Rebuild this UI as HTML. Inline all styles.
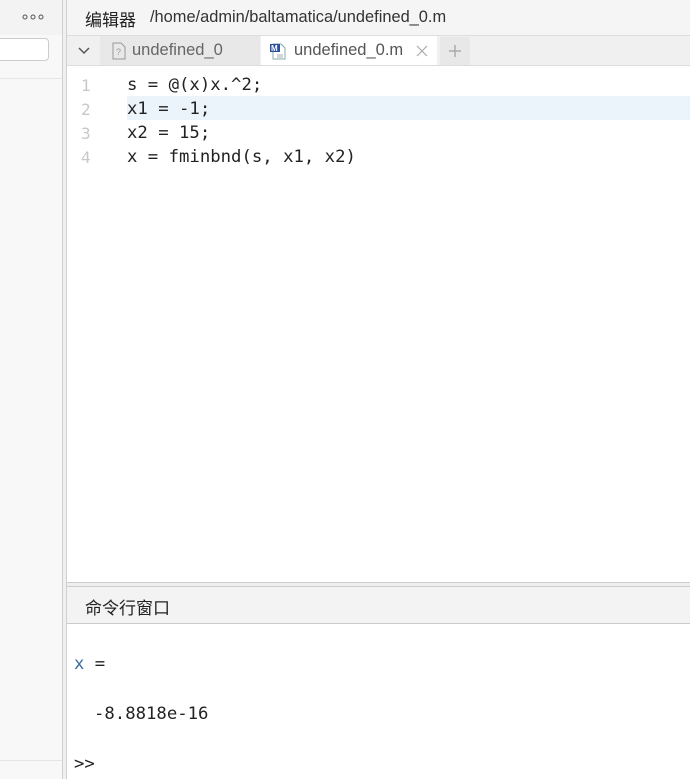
<!DOCTYPE html>
<html><head><meta charset="utf-8"><style>
body{margin:0;width:690px;height:779px;overflow:hidden;background:#fff;font-family:"Liberation Sans","Noto Sans CJK SC",sans-serif;position:relative}
.a{position:absolute}
.mono{font-family:"DejaVu Sans Mono","Liberation Mono",monospace;font-size:17.3px;color:#222}
</style></head><body>
<div class="a" style="left:0;top:0;width:62px;height:779px;background:#f8f8f8"></div>
<div class="a" style="left:0;top:0;width:62px;height:35px;background:#f3f3f3"></div>
<svg class="a" style="left:22px;top:13px" width="22" height="8"><circle cx="3" cy="4" r="2" fill="none" stroke="#555"/><circle cx="11" cy="4" r="2" fill="none" stroke="#555"/><circle cx="19" cy="4" r="2" fill="none" stroke="#555"/></svg>
<div class="a" style="left:-10px;top:38px;width:57px;height:21px;border:1px solid #ccc;border-radius:4px;background:#fff"></div>
<div class="a" style="left:0;top:78px;width:62px;height:1px;background:#e5e5e5"></div>
<div class="a" style="left:0;top:760px;width:62px;height:1px;background:#e5e5e5"></div>
<div class="a" style="left:62px;top:0;width:1px;height:779px;background:#d0d0d0"></div>
<div class="a" style="left:63px;top:0;width:3px;height:779px;background:#f0f0f0"></div>
<div class="a" style="left:66px;top:0;width:1px;height:779px;background:#d0d0d0"></div>
<div class="a" style="left:67px;top:0;width:623px;height:35px;background:#f5f5f5"></div>
<div class="a" style="left:85px;top:6px;font-size:17px;color:#222">编辑器</div>
<div class="a" style="left:150px;top:8px;font-size:16.4px;color:#333">/home/admin/baltamatica/undefined_0.m</div>
<div class="a" style="left:67px;top:35px;width:623px;height:31px;background:#f0f0f0;border-top:1px solid #ddd;box-sizing:border-box"></div>
<div class="a" style="left:100px;top:36px;width:160px;height:30px;background:#e8e8e8"></div>
<svg class="a" style="left:76px;top:44px" width="16" height="14"><path d="M3 4l5 5 5-5" fill="none" stroke="#555" stroke-width="1.5"/></svg>
<svg class="a" style="left:112px;top:42px" width="14" height="18"><path d="M1 1h8l4 4v12H1z" fill="none" stroke="#999"/><text x="4" y="13" font-size="9" fill="#999">?</text></svg>
<div class="a" style="left:132px;top:41px;font-size:16.5px;color:#666">undefined_0</div>
<div class="a" style="left:261px;top:36px;width:176px;height:30px;background:#fff"></div>
<svg class="a" style="left:269px;top:42px" width="18" height="18"><path d="M4 2h8l4 4v11H4z" fill="#fff" stroke="#8aa"/><rect x="1" y="2" width="10" height="8" fill="#2a4fa0"/><text x="2" y="9" font-size="8" font-weight="bold" fill="#fff">M</text><path d="M8 13h6M8 15h6" stroke="#aab"/></svg>
<div class="a" style="left:294px;top:41px;font-size:16.5px;color:#555">undefined_0.m</div>
<svg class="a" style="left:415px;top:44px" width="14" height="14"><path d="M2 2l10 10M12 2L2 12" stroke="#aaa" stroke-width="1.2"/></svg>
<div class="a" style="left:440px;top:37px;width:30px;height:29px;background:#e8e8e8"></div>
<svg class="a" style="left:447px;top:43px" width="16" height="16"><path d="M8 2v12M2 8h12" stroke="#aaa" stroke-width="1.5"/></svg>
<div class="a" style="left:67px;top:65px;width:623px;height:1px;background:#ddd"></div>
<div class="a" style="left:127px;top:96px;width:563px;height:24px;background:#eaf4fa"></div>
<div class="a mono" style="left:81px;top:74px;color:#c8c8c8;line-height:24px;font-size:16px">1<br>2<br>3<br>4</div>
<div class="a mono" style="left:127px;top:73px;line-height:24px;white-space:pre">s = @(x)x.^2;
x1 = -1;
x2 = 15;
x = fminbnd(s, x1, x2)</div>
<div class="a" style="left:67px;top:582px;width:623px;height:1px;background:#ccc"></div>
<div class="a" style="left:67px;top:583px;width:623px;height:3px;background:#efefef"></div>
<div class="a" style="left:67px;top:586px;width:623px;height:1px;background:#ccc"></div>
<div class="a" style="left:67px;top:587px;width:623px;height:37px;background:#f3f3f3;border-bottom:1px solid #ccc;box-sizing:border-box"></div>
<div class="a" style="left:85px;top:594px;font-size:17px;color:#222">命令行窗口</div>
<div class="a mono" style="left:74px;top:654px"><span style="color:#3a6ea5">x</span> =</div>
<div class="a mono" style="left:94px;top:704px">-8.8818e-16</div>
<div class="a mono" style="left:74px;top:754px">&gt;&gt;</div>
</body></html>
